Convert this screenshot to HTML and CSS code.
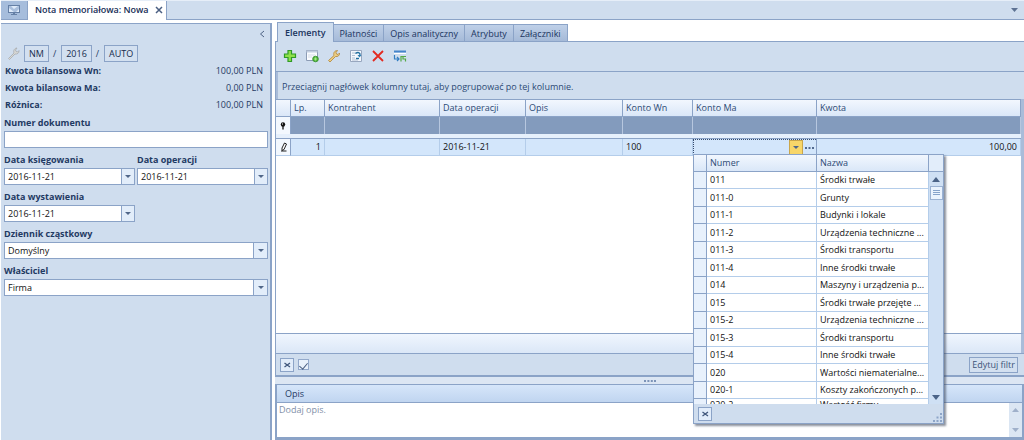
FILE: index.html
```html
<!DOCTYPE html>
<html lang="pl">
<head>
<meta charset="utf-8">
<title>Nota memoriałowa: Nowa</title>
<link rel="stylesheet" href="styles.css">
</head>
<body>
<div class="app">
  <header class="windowbar">
    <button class="home" type="button" aria-label="Pulpit">
      <svg width="14" height="12" viewBox="0 0 14 12"><path d="M1 1h12v8H1z" fill="#6580a6"/><path d="M2 2h10v6H2z" fill="#dfebfa"/><path d="M2 2h2l3 3 4-3h1v3L9 8H7L2 4z" fill="#a9bfdd"/><path d="M6 9h2v1h2v1H4v-1h2z" fill="#6580a6"/></svg>
    </button>
    <div class="window-tab">
      <span>Nota memoriałowa: Nowa</span>
      <button class="plain" type="button" aria-label="Zamknij"><svg width="8" height="8" viewBox="0 0 8 8"><path d="M1 1l6 6M7 1L1 7" stroke="#4a5f82" stroke-width="1.500"/></svg></button>
    </div>
    <button class="plain window-menu" type="button" aria-label="Lista okien"><svg width="7" height="4" viewBox="0 0 7 4"><path d="M0 0h7L3.500 4z" fill="#5d7293"/></svg></button>
  </header>

  <div class="workspace">
    <aside class="sidebar">
      <div class="collapse-row"><button class="plain" type="button" aria-label="Zwiń"><svg width="6" height="8" viewBox="0 0 6 8"><path d="M5 1L1.500 4 5 7" fill="none" stroke="#4d6284"/></svg></button></div>
      <div class="number-row">
        <svg class="wrench" width="13" height="13" viewBox="0 0 13 13"><path d="M1.500 11.500L7 6C6 3 8 1 10 1L8.500 3l.5 1.500 1.500.5L12 3.500C12.500 6 10 7.500 8 7l-5.500 5.500z" fill="#d9d9d5" stroke="#a7abb0" stroke-width=".8"/></svg>
        <button class="chip" type="button">NM</button><span>/</span>
        <button class="chip" type="button">2016</button><span>/</span>
        <button class="chip" type="button">AUTO</button>
      </div>
      <dl class="totals">
        <div><dt>Kwota bilansowa Wn:</dt><dd>100,00 PLN</dd></div>
        <div><dt>Kwota bilansowa Ma:</dt><dd>0,00 PLN</dd></div>
        <div><dt>Różnica:</dt><dd>100,00 PLN</dd></div>
      </dl>
      <form class="fields">
        <div class="field wide"><label for="numer">Numer dokumentu</label><div class="box"><input id="numer" type="text"></div></div>
        <div class="field"><label for="ksieg">Data księgowania</label><div class="box"><input id="ksieg" type="text" value="2016-11-21"><button class="drop" type="button" aria-label="Wybierz datę księgowania"></button></div></div>
        <div class="field"><label for="oper">Data operacji</label><div class="box"><input id="oper" type="text" value="2016-11-21"><button class="drop" type="button" aria-label="Wybierz datę operacji"></button></div></div>
        <div class="field first"><label for="wyst">Data wystawienia</label><div class="box"><input id="wyst" type="text" value="2016-11-21"><button class="drop" type="button" aria-label="Wybierz datę wystawienia"></button></div></div>
        <div class="field wide"><label for="dziennik">Dziennik cząstkowy</label><div class="box select"><select id="dziennik"><option>Domyślny</option></select></div></div>
        <div class="field wide"><label for="wlasc">Właściciel</label><div class="box select"><select id="wlasc"><option>Firma</option></select></div></div>
      </form>
    </aside>

    <main class="main">
      <nav class="tabs">
        <button class="tab active" type="button">Elementy</button>
        <button class="tab" type="button">Płatności</button>
        <button class="tab" type="button">Opis analityczny</button>
        <button class="tab" type="button">Atrybuty</button>
        <button class="tab" type="button">Załączniki</button>
      </nav>

      <section class="panel">
        <div class="toolbar">
          <button class="plain" type="button" aria-label="Dodaj"><svg width="14" height="14" viewBox="0 0 14 14"><path d="M5 1.500h3.500V5H12.500v3.500H8.500v4H5v-4H1.500V5H5z" fill="#8fe04a" stroke="#2f9a27" stroke-width="1.200"/></svg></button>
          <button class="plain" type="button" aria-label="Dodaj pozycję"><svg width="14" height="14" viewBox="0 0 14 14"><path d="M1.500 1.500h11v10h-11z" fill="#fafcff" stroke="#8c9cb5"/><path d="M1.500 1.500h11v2h-11z" fill="#c3cfe0"/><path d="M3 6h7M3 8h4" stroke="#d5dce8"/><circle cx="10.500" cy="10" r="2.800" fill="#57b83d" stroke="#2f8d2a" stroke-width=".8"/><path d="M10.500 8.500v3M9 10h3" stroke="#a5e68c"/></svg></button>
          <button class="plain" type="button" aria-label="Edytuj"><svg width="14" height="14" viewBox="0 0 14 14"><path d="M1.500 11.500L7 6.500C6 3.500 8 1.500 10.500 1.500L9 3.500l.5 1.500 1.500.5 1.500-1.500C13 6.500 10.500 8 8.500 7.500l-5.500 5.500z" fill="#edcf83" stroke="#b58c45" stroke-width=".9"/></svg></button>
          <button class="plain" type="button" aria-label="Pokaż dokument"><svg width="14" height="14" viewBox="0 0 14 14"><path d="M1.500 1.500h11v11h-11z" fill="#f3f7fd" stroke="#98a7bf"/><path d="M3 4h4M3 6.500h3M3 9h3M3 11h6" stroke="#b1bfd3"/><path d="M6.500 4.500c3-2 5-.5 4.500 2" fill="none" stroke="#236f9f" stroke-width="1.400"/><path d="M8.500 6h4L10.500 8.500z" fill="#2d7db0"/><path d="M7 9.500h3" stroke="#236f9f" stroke-width="1.400"/></svg></button>
          <button class="plain" type="button" aria-label="Usuń"><svg width="14" height="14" viewBox="0 0 14 14"><path d="M2 2l10 10M12 2L2 12" stroke="#e32a20" stroke-width="1.800"/></svg></button>
          <button class="plain" type="button" aria-label="Generuj"><svg width="14" height="14" viewBox="0 0 14 14"><path d="M1 2.500h12" stroke="#4484cb" stroke-width="2"/><path d="M1 4.500h12" stroke="#fff"/><path d="M1.500 6v4h4M4 8l2 2-2 2" fill="none" stroke="#337ec2" stroke-width="1.200"/><path d="M8 12.500V7.500h2V10h2.500v2.500M10 7.500h3" fill="none" stroke="#54a945" stroke-width="1.200"/></svg></button>
        </div>
        <div class="group-hint">Przeciągnij nagłówek kolumny tutaj, aby pogrupować po tej kolumnie.</div>
        <div class="grid-body">
          <table class="grid">
            <colgroup><col class="c-mark"><col class="c-lp"><col class="c-kontr"><col class="c-data"><col class="c-opis"><col class="c-wn"><col class="c-ma"><col></colgroup>
            <thead>
              <tr><th></th><th>Lp.</th><th>Kontrahent</th><th>Data operacji</th><th>Opis</th><th>Konto Wn</th><th>Konto Ma</th><th>Kwota</th></tr>
            </thead>
            <tbody>
              <tr class="filter"><td class="mark"><svg width="6" height="8" viewBox="0 0 6 8"><circle cx="3" cy="2.500" r="2.200" fill="#111"/><path d="M3 3v4.500" stroke="#111" stroke-width="1.300"/><path d="M2 2h1" stroke="#fff"/></svg></td><td></td><td></td><td></td><td></td><td></td><td></td><td></td></tr>
              <tr class="divider"><td colspan="8"></td></tr>
              <tr class="data"><td class="mark"><svg width="8" height="10" viewBox="0 0 8 10"><path d="M2 6L4.500 1 6.500 2 4 7.500 2 8.500zM1 9h5.500" fill="#fff" stroke="#222"/></svg></td><td class="num">1</td><td></td><td>2016-11-21</td><td></td><td>100</td>
                <td class="editing">
                  <div class="editor"><input type="text" aria-label="Konto Ma"><button class="drop hot" type="button" aria-label="Rozwiń"></button><button class="more" type="button" aria-label="Więcej"><svg width="9" height="2" viewBox="0 0 9 2"><path d="M0 0h2v2H0zM3.500 0h2v2h-2zM7 0h2v2H7z" fill="#536b91"/></svg></button></div>
                  <div class="popup">
                    <div class="popup-list">
                      <table class="accounts">
                        <colgroup><col class="c-pick"><col class="c-numer"><col></colgroup>
                        <thead><tr><th></th><th>Numer</th><th>Nazwa</th></tr></thead>
                        <tbody>
                          <tr><td></td><td>011</td><td>Środki trwałe</td></tr>
                          <tr><td></td><td>011-0</td><td>Grunty</td></tr>
                          <tr><td></td><td>011-1</td><td>Budynki i lokale</td></tr>
                          <tr><td></td><td>011-2</td><td>Urządzenia techniczne ...</td></tr>
                          <tr><td></td><td>011-3</td><td>Środki transportu</td></tr>
                          <tr><td></td><td>011-4</td><td>Inne środki trwałe</td></tr>
                          <tr><td></td><td>014</td><td>Maszyny i urządzenia p...</td></tr>
                          <tr><td></td><td>015</td><td>Środki trwałe przejęte ...</td></tr>
                          <tr><td></td><td>015-2</td><td>Urządzenia techniczne ...</td></tr>
                          <tr><td></td><td>015-3</td><td>Środki transportu</td></tr>
                          <tr><td></td><td>015-4</td><td>Inne środki trwałe</td></tr>
                          <tr><td></td><td>020</td><td>Wartości niematerialne...</td></tr>
                          <tr><td></td><td>020-1</td><td>Koszty zakończonych p...</td></tr>
                          <tr class="peek"><td></td><td>020-2</td><td>Wartość firmy</td></tr>
                        </tbody>
                      </table>
                      <div class="scroll">
                        <div class="scroll-head"></div>
                        <svg width="8" height="5" viewBox="0 0 8 5"><path d="M0 5h8L4 0z" fill="#4b6387"/></svg>
                        <div class="thumb"><svg width="7" height="6" viewBox="0 0 7 6"><path d="M0 .5h7M0 2.500h7M0 4.500h7" stroke="#86a3cb"/></svg></div>
                        <svg class="down" width="8" height="5" viewBox="0 0 8 5"><path d="M0 0h8L4 5z" fill="#4b6387"/></svg>
                      </div>
                    </div>
                    <div class="popup-foot">
                      <button class="xbtn" type="button" aria-label="Wyczyść"><svg width="7" height="6" viewBox="0 0 7 6"><path d="M.5 1l5.500 4M6 1L.5 5" stroke="#40577c" stroke-width="1.300"/></svg></button>
                      <svg class="grip" width="9" height="9" viewBox="0 0 9 9"><path d="M7 0h2v2H7zM7 3.500h2v2H7zM7 7h2v2H7zM3.500 3.500h2v2h-2zM3.500 7h2v2h-2zM0 7h2v2H0z" fill="#8da5c8"/></svg>
                    </div>
                  </div>
                </td>
                <td class="num">100,00</td></tr>
            </tbody>
          </table>
        </div>
        <div class="summary"></div>
        <div class="filterbar">
          <button class="xbtn" type="button" aria-label="Usuń filtr"><svg width="7" height="6" viewBox="0 0 7 6"><path d="M.5 1l5.500 4M6 1L.5 5" stroke="#40577c" stroke-width="1.300"/></svg></button>
          <input class="check" type="checkbox" checked aria-label="Filtr aktywny">
          <button class="edit-filter" type="button">Edytuj filtr</button>
        </div>
      </section>

      <div class="splitter"><svg width="12" height="2" viewBox="0 0 12 2"><path d="M0 0h2v2H0zM3.400 0h2v2h-2zM6.800 0h2v2h-2zM10 0h2v2h-2z" fill="#7d94b8"/></svg></div>

      <section class="notes">
        <label class="notes-title" for="opis">Opis</label>
        <div class="notes-body">
          <textarea id="opis" placeholder="Dodaj opis."></textarea>
          <div class="notes-scroll"><svg width="7" height="4" viewBox="0 0 7 4"><path d="M0 4h7L3.500 0z" fill="#9fb0ca"/></svg><svg width="7" height="4" viewBox="0 0 7 4"><path d="M0 0h7L3.500 4z" fill="#9fb0ca"/></svg></div>
        </div>
      </section>
    </main>
  </div>
</div>
</body>
</html>
```
FILE: styles.css
```css
* { box-sizing: border-box; }

:root {
  --face: #cfddee;
  --line: #8ba3c7;
  --edge: #a9bcd9;
  --ink: #1f3a63;
  --row-line: #b4cdea;
}

body {
  margin: 0;
  background: #fff;
  color: var(--ink);
  font: 9px/14px "Open Sans", "Noto Sans", sans-serif;
}

button, input, select, textarea { font: inherit; color: inherit; margin: 0; border-radius: 0; }
svg { display: block; flex: none; }
.plain { border: 0; padding: 0; background: none; }

.app { display: flex; flex-direction: column; min-height: 100vh; }

.windowbar {
  display: flex;
  align-items: stretch;
  height: 20px;
  margin-left: 1px;
  background: var(--face);
  border-top: 1px solid #e6eef8;
  border-bottom: 1px solid var(--line);
}
.home {
  display: flex; align-items: center; justify-content: center;
  width: 27px; padding: 0;
  background: #a6bddc; border: 1px solid var(--line); border-width: 0 1px 0 0;
}
.window-tab {
  display: flex; align-items: center; gap: 6px;
  margin-bottom: -1px; padding: 0 3px 2px 7px;
  background: #fff; border-right: 1px solid var(--line);
  font-weight: 600; color: #152c55;
}
.window-menu { margin-left: auto; padding-right: 6px; }

.workspace { flex: 1; display: flex; gap: 3px; padding: 2px 0 0 1px; }

.sidebar {
  flex: none; width: 271px; margin-top: 1px; padding: 2px 2px 0 3px;
  background: var(--face);
  border: 1px solid var(--line); border-width: 1px 2px 0 0;
}
.collapse-row { display: flex; justify-content: flex-end; align-items: center; height: 15px; margin-bottom: 4px; padding-right: 3px; }
.number-row { display: flex; align-items: center; gap: 4px; height: 17px; padding-left: 3px; }
.number-row .chip + span { margin: 0 1px 0 0; }
.chip { height: 17px; padding: 0 4px; line-height: 15px; background: #d3e0f0; border: 1px solid var(--line); color: #152c4e; }
.totals { margin: 0 1px 2px; }
.totals div { display: flex; justify-content: space-between; line-height: 17px; padding-right: 4px; }
.totals dt { font-weight: 700; }
.totals dd { margin: 0; }

.fields { display: grid; grid-template-columns: repeat(2, minmax(0, 1fr)); gap: 4px 2px; }
.field.wide { grid-column: 1 / -1; }
.field.first { grid-column: 1; }
.field label { display: block; font-weight: 700; line-height: 16px; }
.box { position: relative; display: flex; height: 17px; background: #fff; border: 1px solid var(--line); }
.box input, .box select { flex: 1; min-width: 0; border: 0; padding: 0 3px; background: transparent; color: #111; appearance: none; outline: 0; }
.drop { flex: none; width: 13px; padding: 0; border: 0; border-left: 1px solid var(--line); background: #e2edfa; display: flex; align-items: center; justify-content: center; }
.drop::before, .select::after { content: ""; border: 3px solid transparent; border-top-color: #506789; border-bottom: 0; }
.select::before { content: ""; position: absolute; right: 0; top: 0; bottom: 0; width: 13px; border-left: 1px solid var(--line); background: #e2edfa; pointer-events: none; }
.select::after { position: absolute; right: 3px; top: 6px; pointer-events: none; }

.main { flex: 1; min-width: 0; display: flex; flex-direction: column; }
.tabs { display: flex; align-items: flex-end; height: 19px; padding-left: 2px; }
.tab { height: 17px; padding: 0 6px; line-height: 15px; border: 1px solid var(--line); border-width: 1px 1px 0 0; background: linear-gradient(#bfd0e8, #a5bad8); color: #1b355f; }
.tab.active { height: 20px; margin-bottom: -1px; padding: 0 7px; position: relative; border-left-width: 1px; background: var(--face); font-weight: 600; }

.panel { flex: 1; display: flex; flex-direction: column; background: var(--face); border: 1px solid var(--line); border-width: 1px 0 2px 1px; }
.toolbar { display: flex; align-items: center; gap: 8px; height: 30px; padding: 0 0 2px 7px; border-bottom: 1px solid var(--line); }
.group-hint { padding: 8px 4px 5px; line-height: 14px; color: #2c4a75; border-left: 2px solid var(--edge); }
.grid-body { flex: 1; min-height: 233px; background: #fff; border-right: 3px solid var(--edge); }

table { border-collapse: separate; border-spacing: 0; table-layout: fixed; width: 100%; }
th { font-weight: 400; text-align: left; background: linear-gradient(#f2f7fe, #dae7f8); border: 1px solid var(--line); border-width: 1px 1px 1px 0; }
th, td { padding: 0 3px; white-space: nowrap; }
.grid th { height: 18px; line-height: 16px; color: #2c4a75; }
.c-mark { width: 15px; }
.c-lp { width: 34px; }
.c-kontr { width: 115px; }
.c-data { width: 86px; }
.c-opis { width: 97px; }
.c-wn { width: 70px; }
.c-ma { width: 124px; }
.grid .mark { padding: 0 4px; background: #f3f8fe; border-right: 1px solid var(--line); }
.filter td { height: 17px; background: #839bbd; border-right: 1px solid #b7c7df; }
.divider td { height: 5px; padding: 0; line-height: 0; background: #e6f0fc; border: 1px solid var(--line); border-width: 0 0 1px; }
.data > td { height: 17px; line-height: 16px; background: #d3e6fb; border: 1px solid var(--row-line); border-width: 0 1px 1px 0; color: #111; }
.num { text-align: right; }
.data > .editing { position: relative; padding: 0; border-right-color: var(--line); }
.editor { display: flex; height: 16px; border-left: 1px dotted #34496b; border-top: 1px dotted #34496b; }
.editor input { flex: 1; min-width: 0; border: 0; padding: 0 3px; background: transparent; outline: 0; }
.drop.hot { width: 14px; border: 1px solid #caa64a; background: #f8d669; }
.more { display: flex; align-items: center; justify-content: center; width: 13px; padding: 0; border: 0; background: transparent; }

.popup { position: absolute; z-index: 2; left: 0; top: 15px; width: 251px; background: var(--face); border: 1px solid var(--line); box-shadow: 2px 2px 2px rgba(60, 70, 90, .6); line-height: 14px; }
.popup-list { display: flex; height: 249px; overflow: hidden; background: #fff; }
.accounts { flex: 1; width: 0; align-self: flex-start; }
.c-pick { width: 13px; }
.c-numer { width: 110px; }
.accounts th { height: 17px; line-height: 16px; border-top: 0; color: #2c4a75; }
.accounts td { height: 17px; line-height: 16px; border: 1px solid var(--row-line); border-width: 0 1px 1px 0; padding-right: 0; }
.accounts td:first-child { background: #e8f1fc; border-color: var(--line); }
.accounts tr:nth-child(even) td { height: 18px; line-height: 17px; }
.accounts .peek:nth-child(even) td { line-height: 12px; vertical-align: top; }
.scroll { flex: none; width: 14px; display: flex; flex-direction: column; align-items: center; background: #cfe0f4; }
.scroll-head { align-self: stretch; height: 17px; margin-bottom: 5px; background: #e2edfa; border-bottom: 1px solid var(--line); }
.thumb { display: flex; align-items: center; justify-content: center; width: 13px; height: 14px; margin-top: 4px; background: #eaf3fe; border: 1px solid #9bb2d3; }
.down { margin: auto 0 4px; }
.popup-foot { display: flex; align-items: center; justify-content: space-between; height: 19px; padding: 0 1px 0 4px; }
.grip { align-self: flex-end; margin-bottom: 1px; }
.xbtn { display: flex; align-items: center; justify-content: center; width: 14px; height: 14px; padding: 0; border: 1px solid var(--line); background: #e1ecfa; }

.summary { height: 20px; border-top: 1px solid var(--line); background: linear-gradient(#f0f6fe, #dbe7f7); border-right: 3px solid var(--edge); }
.filterbar { display: flex; align-items: center; gap: 4px; height: 22px; padding: 0 6px 0 4px; border-top: 1px solid var(--line); }
.check { appearance: none; width: 11px; height: 11px; border: 1px solid #93a9cb; background: #e9f1fb; display: grid; place-items: center; }
.check:checked::before { content: ""; width: 4px; height: 7px; border: solid #4a5f82; border-width: 0 1px 1px 0; transform: rotate(40deg); }
.edit-filter { margin-left: auto; height: 16px; padding: 0 2px; line-height: 14px; border: 1px solid var(--line); background: #d3e0f0; color: #3d5478; }

.splitter { display: flex; justify-content: center; align-items: center; height: 7px; background: #dce6f3; }
.notes { border: 1px solid var(--line); border-width: 1px 2px 3px 2px; }
.notes-title { display: block; height: 18px; padding-left: 8px; line-height: 17px; background: linear-gradient(#d6e6fa, #c0d5f0); border-bottom: 1px solid var(--line); }
.notes-body { display: flex; height: 34px; }
.notes textarea { flex: 1; padding: 0 2px; border: 0; resize: none; outline: 0; background: #fff; overflow: hidden; }
.notes textarea::placeholder { color: #8190a8; opacity: 1; }
.notes-scroll { display: flex; flex-direction: column; justify-content: space-between; align-items: center; width: 13px; padding: 5px 0; background: #dbe6f3; }
```
